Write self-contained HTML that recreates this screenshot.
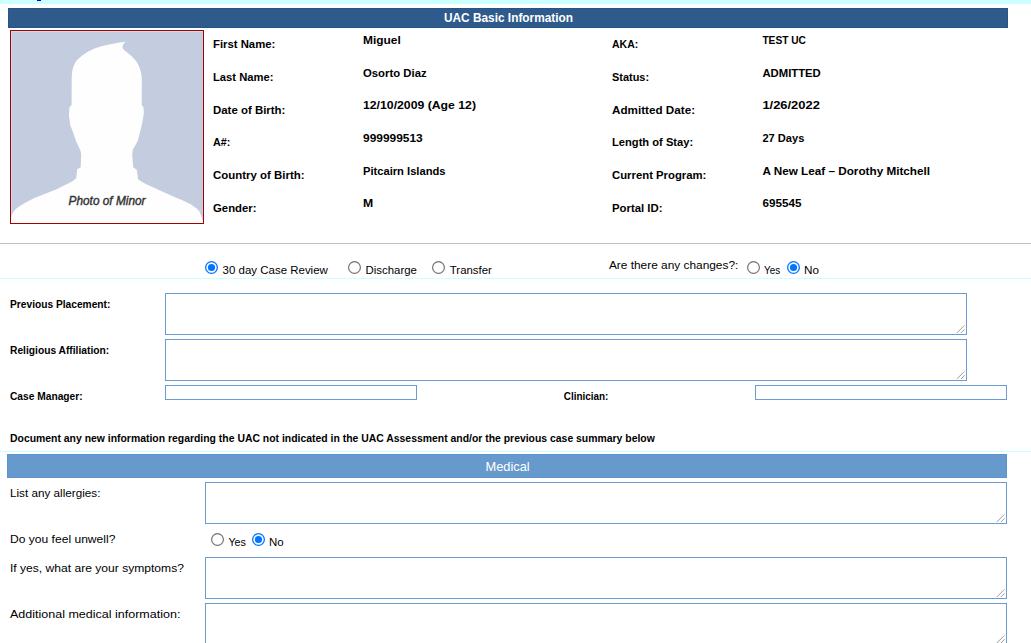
<!DOCTYPE html>
<html><head><meta charset="utf-8"><title>UAC Basic Information</title>
<style>
html,body{margin:0;padding:0;background:#fff;width:1031px;height:643px;overflow:hidden;}
svg{display:block;font-family:"Liberation Sans",sans-serif;}
</style></head><body>
<svg width="1031" height="643" viewBox="0 0 1031 643">
<rect x="0" y="0" width="1031" height="4" fill="#ccffff"/>
<rect x="37" y="0" width="4" height="1" fill="#0000ee"/>
<rect x="8" y="8" width="1000" height="20" fill="#285589"/><rect x="9" y="9" width="998" height="18" fill="#2e5b8b"/>
<rect x="10" y="30" width="194" height="194" fill="#a40000"/>
<rect x="11" y="31" width="192" height="192" fill="#c8daee"/><rect x="12" y="32" width="191" height="191" fill="#c4cde0"/>
<path d="M11,223 L11,219 C11.5,214 14,209 20.7,205.5 C25,203 30,200 34.4,198 L56,189.4 L62,186.4 L72.1,181.4 L76.2,178.3 L77.2,169.3 L80.7,167.2 L81.2,154.1 L80.2,150.1 L76,141 L72.5,130.7 L70.3,125.4 L68.9,115.5 L69.4,107.5 L71.6,104.8 L71.7,78 C72,68 74,62 80.3,57.2 C86,52 95,48 100.7,46.6 C108,44.5 118,42.5 125.5,41.7 C123,44 122,46.5 122.7,48.2 C124,50 125,51 126,51.5 C131,55 136,60 138.2,64.5 C140.5,69 141.5,74 141.8,78 L141.7,104.8 L143.5,107.5 L143.9,112.9 L142.1,123.6 L140.4,130.7 L137.7,141 L132.7,150.1 L132.2,155.1 L133.2,167.2 L136.7,169.8 L138.2,179.4 L144.8,183.4 L160,190.5 L176.7,198 C184,201 189,203 192.6,205.5 C197,208.5 199.5,211 200,212.9 C201.5,216 202.5,219 203,222 L203,223 Z" fill="#fdfefd"/>
<rect x="0" y="243" width="1031" height="1" fill="#bdbdbd"/>
<rect x="0" y="278" width="1031" height="1" fill="#ccffff"/>
<circle cx="211.5" cy="267.5" r="5.85" fill="#fff" stroke="#0075ff" stroke-width="1.3"/><circle cx="211.5" cy="267.5" r="3.6" fill="#0075ff"/>
<circle cx="354.5" cy="267.5" r="5.9" fill="#fff" stroke="#737373" stroke-width="1.2"/>
<circle cx="438.5" cy="267.5" r="5.9" fill="#fff" stroke="#737373" stroke-width="1.2"/>
<circle cx="753.5" cy="267.5" r="5.9" fill="#fff" stroke="#737373" stroke-width="1.2"/>
<circle cx="793.5" cy="267.5" r="5.85" fill="#fff" stroke="#0075ff" stroke-width="1.3"/><circle cx="793.5" cy="267.5" r="3.6" fill="#0075ff"/>
<rect x="165.5" y="293.5" width="801" height="41" fill="#fff" stroke="#6b9bd1" stroke-width="1"/>
<line x1="957.2" y1="332.6" x2="964.5" y2="325.3" stroke="#505050" stroke-width="0.9" stroke-dasharray="0.9 0.5"/><line x1="961.4" y1="332.6" x2="964.7" y2="329.1" stroke="#505050" stroke-width="0.9" stroke-dasharray="0.9 0.5"/>
<rect x="165.5" y="339.5" width="801" height="41" fill="#fff" stroke="#6b9bd1" stroke-width="1"/>
<line x1="957.2" y1="378.6" x2="964.5" y2="371.3" stroke="#505050" stroke-width="0.9" stroke-dasharray="0.9 0.5"/><line x1="961.4" y1="378.6" x2="964.7" y2="375.1" stroke="#505050" stroke-width="0.9" stroke-dasharray="0.9 0.5"/>
<rect x="165.5" y="385.5" width="251" height="14" fill="#fff" stroke="#6b9bd1" stroke-width="1"/>
<rect x="755.5" y="385.5" width="251" height="14" fill="#fff" stroke="#6b9bd1" stroke-width="1"/>
<rect x="205.5" y="482.5" width="801" height="41" fill="#fff" stroke="#6b9bd1" stroke-width="1"/>
<line x1="997.2" y1="521.6" x2="1004.5" y2="514.3" stroke="#505050" stroke-width="0.9" stroke-dasharray="0.9 0.5"/><line x1="1001.4" y1="521.6" x2="1004.7" y2="518.1" stroke="#505050" stroke-width="0.9" stroke-dasharray="0.9 0.5"/>
<rect x="205.5" y="557.5" width="801" height="41" fill="#fff" stroke="#6b9bd1" stroke-width="1"/>
<line x1="997.2" y1="596.6" x2="1004.5" y2="589.3" stroke="#505050" stroke-width="0.9" stroke-dasharray="0.9 0.5"/><line x1="1001.4" y1="596.6" x2="1004.7" y2="593.1" stroke="#505050" stroke-width="0.9" stroke-dasharray="0.9 0.5"/>
<rect x="205.5" y="603.5" width="801" height="41" fill="#fff" stroke="#6b9bd1" stroke-width="1"/>
<line x1="997.2" y1="642.6" x2="1004.5" y2="635.3" stroke="#505050" stroke-width="0.9" stroke-dasharray="0.9 0.5"/><line x1="1001.4" y1="642.6" x2="1004.7" y2="639.1" stroke="#505050" stroke-width="0.9" stroke-dasharray="0.9 0.5"/>
<rect x="0" y="451" width="1031" height="1" fill="#ccffff"/>
<rect x="7" y="454" width="1000" height="24" fill="#6094c9"/><rect x="8" y="455" width="998" height="22" fill="#6699cc"/>
<circle cx="217.5" cy="539.5" r="5.9" fill="#fff" stroke="#737373" stroke-width="1.2"/>
<circle cx="258.5" cy="539.5" r="5.85" fill="#fff" stroke="#0075ff" stroke-width="1.3"/><circle cx="258.5" cy="539.5" r="3.6" fill="#0075ff"/>
<text x="444.00" y="22.00" font-size="12.4" font-weight="bold" font-style="normal" fill="#fff" textLength="129.00" lengthAdjust="spacingAndGlyphs">UAC Basic Information</text>
<text x="213.00" y="48.00" font-size="11.2" font-weight="bold" font-style="normal" fill="#000" textLength="62.32" lengthAdjust="spacingAndGlyphs">First Name:</text>
<text x="213.00" y="81.00" font-size="11.2" font-weight="bold" font-style="normal" fill="#000" textLength="60.41" lengthAdjust="spacingAndGlyphs">Last Name:</text>
<text x="213.00" y="114.00" font-size="11.2" font-weight="bold" font-style="normal" fill="#000" textLength="72.38" lengthAdjust="spacingAndGlyphs">Date of Birth:</text>
<text x="213.00" y="146.00" font-size="11.2" font-weight="bold" font-style="normal" fill="#000" textLength="17.32" lengthAdjust="spacingAndGlyphs">A#:</text>
<text x="213.00" y="179.00" font-size="11.2" font-weight="bold" font-style="normal" fill="#000" textLength="91.49" lengthAdjust="spacingAndGlyphs">Country of Birth:</text>
<text x="213.00" y="212.00" font-size="11.2" font-weight="bold" font-style="normal" fill="#000" textLength="43.49" lengthAdjust="spacingAndGlyphs">Gender:</text>
<text x="363.00" y="44.00" font-size="11.3" font-weight="bold" font-style="normal" fill="#000" textLength="37.82" lengthAdjust="spacingAndGlyphs">Miguel</text>
<text x="363.00" y="77.00" font-size="11.3" font-weight="bold" font-style="normal" fill="#000" textLength="63.62" lengthAdjust="spacingAndGlyphs">Osorto Diaz</text>
<text x="363.00" y="109.00" font-size="11.3" font-weight="bold" font-style="normal" fill="#000" textLength="112.98" lengthAdjust="spacingAndGlyphs">12/10/2009 (Age 12)</text>
<text x="363.00" y="141.50" font-size="11.3" font-weight="bold" font-style="normal" fill="#000" textLength="59.71" lengthAdjust="spacingAndGlyphs">999999513</text>
<text x="363.00" y="174.50" font-size="11.3" font-weight="bold" font-style="normal" fill="#000" textLength="82.52" lengthAdjust="spacingAndGlyphs">Pitcairn Islands</text>
<text x="363.00" y="207.00" font-size="11.3" font-weight="bold" font-style="normal" fill="#000" textLength="10.18" lengthAdjust="spacingAndGlyphs">M</text>
<text x="612.00" y="48.00" font-size="11.2" font-weight="bold" font-style="normal" fill="#000" textLength="26.20" lengthAdjust="spacingAndGlyphs">AKA:</text>
<text x="612.00" y="80.50" font-size="11.2" font-weight="bold" font-style="normal" fill="#000" textLength="37.09" lengthAdjust="spacingAndGlyphs">Status:</text>
<text x="612.00" y="113.50" font-size="11.2" font-weight="bold" font-style="normal" fill="#000" textLength="83.02" lengthAdjust="spacingAndGlyphs">Admitted Date:</text>
<text x="612.00" y="146.00" font-size="11.2" font-weight="bold" font-style="normal" fill="#000" textLength="81.17" lengthAdjust="spacingAndGlyphs">Length of Stay:</text>
<text x="612.00" y="179.00" font-size="11.2" font-weight="bold" font-style="normal" fill="#000" textLength="94.40" lengthAdjust="spacingAndGlyphs">Current Program:</text>
<text x="612.00" y="211.50" font-size="11.2" font-weight="bold" font-style="normal" fill="#000" textLength="50.50" lengthAdjust="spacingAndGlyphs">Portal ID:</text>
<text x="762.40" y="44.00" font-size="11.3" font-weight="bold" font-style="normal" fill="#000" textLength="43.58" lengthAdjust="spacingAndGlyphs">TEST UC</text>
<text x="762.40" y="77.00" font-size="11.3" font-weight="bold" font-style="normal" fill="#000" textLength="58.41" lengthAdjust="spacingAndGlyphs">ADMITTED</text>
<text x="762.40" y="109.00" font-size="11.3" font-weight="bold" font-style="normal" fill="#000" textLength="57.48" lengthAdjust="spacingAndGlyphs">1/26/2022</text>
<text x="762.40" y="142.00" font-size="11.3" font-weight="bold" font-style="normal" fill="#000" textLength="42.01" lengthAdjust="spacingAndGlyphs">27 Days</text>
<text x="762.40" y="175.00" font-size="11.3" font-weight="bold" font-style="normal" fill="#000" textLength="167.68" lengthAdjust="spacingAndGlyphs">A New Leaf – Dorothy Mitchell</text>
<text x="762.40" y="207.00" font-size="11.3" font-weight="bold" font-style="normal" fill="#000" textLength="39.02" lengthAdjust="spacingAndGlyphs">695545</text>
<text x="10.00" y="308.00" font-size="10.9" font-weight="bold" font-style="normal" fill="#000" textLength="100.38" lengthAdjust="spacingAndGlyphs">Previous Placement:</text>
<text x="10.00" y="354.00" font-size="10.9" font-weight="bold" font-style="normal" fill="#000" textLength="99.20" lengthAdjust="spacingAndGlyphs">Religious Affiliation:</text>
<text x="10.00" y="400.00" font-size="10.9" font-weight="bold" font-style="normal" fill="#000" textLength="72.59" lengthAdjust="spacingAndGlyphs">Case Manager:</text>
<text x="563.80" y="400.00" font-size="10.9" font-weight="bold" font-style="normal" fill="#000" textLength="44.41" lengthAdjust="spacingAndGlyphs">Clinician:</text>
<text x="10.00" y="442.00" font-size="10.8" font-weight="bold" font-style="normal" fill="#000" textLength="644.80" lengthAdjust="spacingAndGlyphs">Document any new information regarding the UAC not indicated in the UAC Assessment and/or the previous case summary below</text>
<text x="222.60" y="274.00" font-size="11.6" font-weight="normal" font-style="normal" fill="#000" textLength="105.26" lengthAdjust="spacingAndGlyphs">30 day Case Review</text>
<text x="365.60" y="274.00" font-size="11.6" font-weight="normal" font-style="normal" fill="#000" textLength="51.32" lengthAdjust="spacingAndGlyphs">Discharge</text>
<text x="449.80" y="274.00" font-size="11.6" font-weight="normal" font-style="normal" fill="#000" textLength="42.11" lengthAdjust="spacingAndGlyphs">Transfer</text>
<text x="608.90" y="269.00" font-size="11.6" font-weight="normal" font-style="normal" fill="#000" textLength="129.41" lengthAdjust="spacingAndGlyphs">Are there any changes?:</text>
<text x="764.00" y="273.50" font-size="11.6" font-weight="normal" font-style="normal" fill="#000" textLength="16.21" lengthAdjust="spacingAndGlyphs">Yes</text>
<text x="804.00" y="273.50" font-size="11.6" font-weight="normal" font-style="normal" fill="#000" textLength="14.98" lengthAdjust="spacingAndGlyphs">No</text>
<text x="485.50" y="471.00" font-size="12.8" font-weight="normal" font-style="normal" fill="#fff" textLength="44.21" lengthAdjust="spacingAndGlyphs">Medical</text>
<text x="10.00" y="497.00" font-size="11.3" font-weight="normal" font-style="normal" fill="#000" textLength="90.41" lengthAdjust="spacingAndGlyphs">List any allergies:</text>
<text x="10.00" y="543.00" font-size="11.3" font-weight="normal" font-style="normal" fill="#000" textLength="105.37" lengthAdjust="spacingAndGlyphs">Do you feel unwell?</text>
<text x="228.40" y="546.00" font-size="11.6" font-weight="normal" font-style="normal" fill="#000" textLength="17.42" lengthAdjust="spacingAndGlyphs">Yes</text>
<text x="269.00" y="546.00" font-size="11.6" font-weight="normal" font-style="normal" fill="#000" textLength="14.68" lengthAdjust="spacingAndGlyphs">No</text>
<text x="10.00" y="572.30" font-size="11.3" font-weight="normal" font-style="normal" fill="#000" textLength="173.89" lengthAdjust="spacingAndGlyphs">If yes, what are your symptoms?</text>
<text x="10.00" y="617.70" font-size="11.3" font-weight="normal" font-style="normal" fill="#000" textLength="170.38" lengthAdjust="spacingAndGlyphs">Additional medical information:</text>
<text x="68.60" y="204.80" font-size="12" font-weight="normal" font-style="italic" fill="#333" stroke="#333" stroke-width="0.4" textLength="76.87" lengthAdjust="spacingAndGlyphs">Photo of Minor</text>
</svg>
</body></html>
